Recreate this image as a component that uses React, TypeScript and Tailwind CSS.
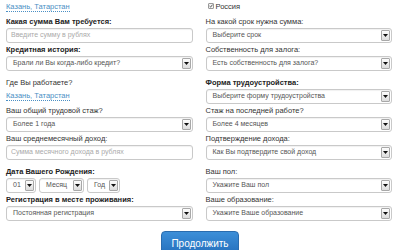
import React from 'react';

const Label = ({ text, bold }: { text: string; bold?: boolean }) => (
  <div className={`h-[13px] leading-[14px] text-[7.5px] ${bold ? 'font-bold text-[#222]' : 'text-[#333]'}`}>
    {text}
  </div>
);

const Arrow = () => (
  <div className="self-stretch w-[9px] m-[1px] ml-0 border border-[#a8a8a8] rounded-[1px] bg-gradient-to-b from-[#fdfdfd] to-[#dcdcdc] flex items-center justify-center">
    <svg width="5" height="3" viewBox="0 0 5 3">
      <path d="M0 0 H5 L2.5 3 Z" fill="#111" />
    </svg>
  </div>
);

const Select = ({ value, className = '' }: { value: string; className?: string }) => (
  <div className={`h-[15px] flex items-center border border-[#c9c9c9] rounded-[3px] bg-white shadow-[inset_0_1px_1px_rgba(0,0,0,0.06)] ${className}`}>
    <span className="flex-1 pl-[6px] text-[7px] text-[#555] truncate">{value}</span>
    <Arrow />
  </div>
);

const Input = ({ placeholder }: { placeholder: string }) => (
  <div className="h-[15px] flex items-center border border-[#c9c9c9] rounded-[3px] bg-white shadow-[inset_0_1px_1px_rgba(0,0,0,0.06)]">
    <span className="pl-[4px] text-[7px] text-[#aaa]">{placeholder}</span>
  </div>
);

const CityLink = () => (
  <span className="text-[7.5px] text-[#4a8fc4] border-b border-dotted border-[#4a8fc4] leading-[9px]">
    Казань, Татарстан
  </span>
);

const Row = ({ label, bold, children }: { label: string; bold?: boolean; children: React.ReactNode }) => (
  <div>
    <Label text={label} bold={bold} />
    {children}
  </div>
);

export default function App() {
  return (
    <div className="w-[400px] h-[250px] overflow-hidden bg-white font-['Liberation_Sans',Arial,sans-serif]">
      <div className="grid grid-cols-2 gap-x-[13px] pl-[6px] pr-[8px]">
        {/* left column */}
        <div className="flex flex-col">
          <div className="h-[15px] flex items-start pt-[2px]">
            <CityLink />
          </div>
          <Row label="Какая сумма Вам требуется:" bold>
            <Input placeholder="Введите сумму в рублях" />
          </Row>
          <Row label="Кредитная история:" bold>
            <Select value="Брали ли Вы когда-либо кредит?" />
          </Row>
          <div className="mt-[5px]">
            <Label text="Где Вы работаете?" />
            <div className="h-[15px] flex items-start pt-[2px]">
              <CityLink />
            </div>
          </div>
          <Row label="Ваш общий трудовой стаж?">
            <Select value="Более 1 года" />
          </Row>
          <Row label="Ваш среднемесячный доход:">
            <Input placeholder="Сумма месячного дохода в рублях" />
          </Row>
          <div className="mt-[5px]">
            <Row label="Дата Вашего Рождения:" bold>
              <div className="flex gap-[3px]">
                <Select value="01" className="w-[30px]" />
                <Select value="Месяц" className="w-[45px]" />
                <Select value="Год" className="w-[33px]" />
              </div>
            </Row>
          </div>
          <Row label="Регистрация в месте проживания:" bold>
            <Select value="Постоянная регистрация" />
          </Row>
        </div>

        {/* right column */}
        <div className="flex flex-col">
          <div className="h-[15px] flex items-start pt-[2px] gap-[2px] pl-[2px]">
            <span className="w-[6px] h-[6px] mt-[1px] border border-[#999] rounded-[1px] bg-[#f4f4f4] flex items-center justify-center">
              <svg width="4" height="4" viewBox="0 0 5 5">
                <path d="M0.7 2.6 L2 3.9 L4.4 0.8" stroke="#333" strokeWidth="1" fill="none" />
              </svg>
            </span>
            <span className="text-[7.5px] text-[#333] leading-[9px]">Россия</span>
          </div>
          <Row label="На какой срок нужна сумма:">
            <Select value="Выберите срок" />
          </Row>
          <Row label="Собственность для залога:">
            <Select value="Есть собственность для залога?" />
          </Row>
          <div className="mt-[5px]">
            <Row label="Форма трудоустройства:" bold>
              <Select value="Выберите форму трудоустройства" />
            </Row>
          </div>
          <Row label="Стаж на последней работе?">
            <Select value="Более 4 месяцев" />
          </Row>
          <Row label="Подтверждение дохода:">
            <Select value="Как Вы подтвердите свой доход" />
          </Row>
          <div className="mt-[5px]">
            <Row label="Ваш пол:">
              <Select value="Укажите Ваш пол" />
            </Row>
          </div>
          <Row label="Ваше образование:">
            <Select value="Укажите Ваше образование" />
          </Row>
        </div>
      </div>

      <div className="flex justify-center mt-[10px]">
        <button className="w-[78px] h-[24px] rounded-[4px] bg-gradient-to-b from-[#3d8fd8] to-[#2470bd] border border-[#2a6cae] text-white text-[10px]">
          Продолжить
        </button>
      </div>
    </div>
  );
}
